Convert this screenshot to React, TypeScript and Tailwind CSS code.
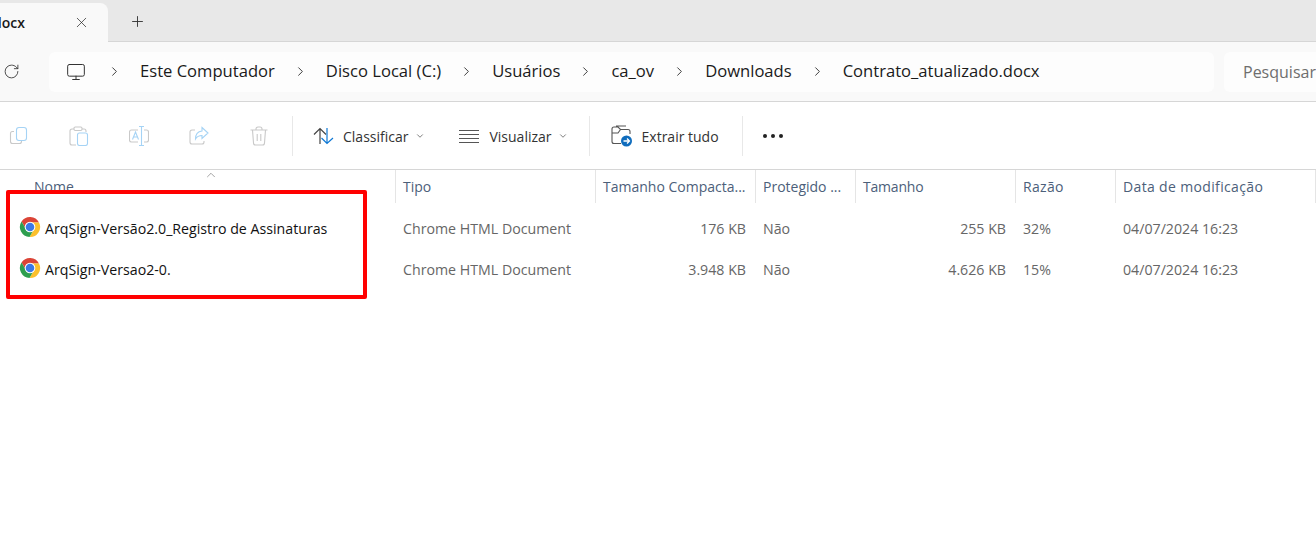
import { X, Plus, RotateCw, Monitor, ChevronRight, ChevronDown, ChevronUp } from 'lucide-react';

const font = "font-['Open_Sans','Noto_Sans',sans-serif]";

// ─── Icons ──────────────────────────────────────────────────────────────────

function ChromeIcon() {
    return (
        <svg width="22" height="22" viewBox="0 0 24 24" className="shrink-0 -mt-[2px]">
            <path fill="#DB4437" d="M12 7L21.8 7A11 11 0 0 0 2.77 6.01L7.67 14.5A5 5 0 0 1 12 7Z" />
            <path fill="#FBC02D" d="M16.33 14.5L11.43 22.99A11 11 0 0 0 21.8 7L12 7A5 5 0 0 1 16.33 14.5Z" />
            <path fill="#2E9E4F" d="M7.67 14.5L2.77 6.01A11 11 0 0 0 11.43 22.99L16.33 14.5A5 5 0 0 1 7.67 14.5Z" />
            <circle cx="12" cy="12" r="5.8" fill="#fff" />
            <circle cx="12" cy="12" r="4.7" fill="#3B78E7" />
        </svg>
    );
}

function CopyIcon() {
    return (
        <svg width="20" height="20" viewBox="0 0 20 20" fill="none" strokeWidth="1.1">
            <path stroke="#c9c9c9" d="M5 5.5H3.5a2 2 0 0 0-2 2v8a2 2 0 0 0 2 2h7a2 2 0 0 0 2-2v-1" />
            <rect x="7.5" y="1.5" width="10" height="13" rx="2.5" stroke="#a5d3f5" />
        </svg>
    );
}

function PasteIcon() {
    return (
        <svg width="20" height="20" viewBox="0 0 20 20" fill="none" strokeWidth="1.1">
            <path stroke="#c9c9c9" d="M5 3H3a2 2 0 0 0-2 2v12a2 2 0 0 0 2 2h4M13 3h2a2 2 0 0 1 2 2v1" />
            <rect x="5" y="1" width="8" height="3.5" rx="1.2" stroke="#c9c9c9" />
            <rect x="8.5" y="7" width="10" height="12.5" rx="2" stroke="#a5d3f5" />
        </svg>
    );
}

function RenameIcon() {
    return (
        <svg width="20" height="20" viewBox="0 0 20 20" fill="none" strokeWidth="1.1">
            <path stroke="#c9c9c9" d="M9 4H2.5a2 2 0 0 0-2 2v8a2 2 0 0 0 2 2H9M15 4h2.5a2 2 0 0 1 2 2v8a2 2 0 0 1-2 2H15" />
            <path stroke="#a5d3f5" d="M10 .5h5M12.5 .5v19M10 19.5h5M3.5 13.5L6.5 6l3 7.5M4.5 11h4" />
        </svg>
    );
}

function ShareIcon() {
    return (
        <svg width="20" height="20" viewBox="0 0 20 20" fill="none" strokeWidth="1.1">
            <path stroke="#c9c9c9" d="M6 4H3a2 2 0 0 0-2 2v10a2 2 0 0 0 2 2h10a2 2 0 0 0 2-2v-1" />
            <path stroke="#a5d3f5" d="M13 1.5L19 7l-6 5.5V9.5c-3 0-5 1-6.5 3.5 0-5 2.5-7.5 6.5-8V1.5Z" />
        </svg>
    );
}

function TrashIcon() {
    return (
        <svg width="20" height="20" viewBox="0 0 20 20" fill="none" strokeWidth="1.1" stroke="#c9c9c9">
            <path d="M1.5 4h17M7 4V3a2 2 0 0 1 2-2h2a2 2 0 0 1 2 2v1M3.5 4l1 13a2 2 0 0 0 2 2h7a2 2 0 0 0 2-2l1-13M8.2 8v7M11.8 8v7" />
        </svg>
    );
}

function SortIcon() {
    return (
        <svg width="22" height="18" viewBox="0 0 22 18" fill="none" strokeWidth="1.2" className="shrink-0">
            <path stroke="#444" d="M7 17V1.5M1 7.5l6-6 6 6" />
            <path stroke="#0f78d4" d="M14 1v15.5M8.5 11l5.5 5.5 6-5.5" />
        </svg>
    );
}

function ListIcon() {
    return (
        <svg width="20" height="14" viewBox="0 0 20 14" fill="none" stroke="#555" strokeWidth="1" className="shrink-0">
            <path d="M0 1.5h20M0 5.5h20M0 9.5h20M0 13.5h20" />
        </svg>
    );
}

function ExtractIcon() {
    return (
        <svg width="22" height="22" viewBox="0 0 22 22" fill="none" className="shrink-0">
            <path
                stroke="#555"
                strokeWidth="1.1"
                d="M10 18.5H3a2 2 0 0 1-2-2V4a2 2 0 0 1 2-2h4l2.5 2.5H17a2 2 0 0 1 2 2V9M1 8h6l2.5-3.5M5 1h10"
            />
            <circle cx="15.5" cy="16" r="5.5" fill="#0f6cbd" />
            <path stroke="#fff" strokeWidth="1.3" d="M12.5 16h6M16 13.5l2.5 2.5-2.5 2.5" />
        </svg>
    );
}

function Crumb({ label }: { label: string }) {
    return (
        <>
            <ChevronRight size={15} strokeWidth={1.4} className="text-[#222] shrink-0" />
            <span className="whitespace-nowrap -mt-px">{label}</span>
        </>
    );
}

// ─── Data ───────────────────────────────────────────────────────────────────

const files = [
    { name: 'ArqSign-Versão2.0_Registro de Assinaturas', packed: '176 KB', size: '255 KB', ratio: '32%' },
    { name: 'ArqSign-Versao2-0.', packed: '3.948 KB', size: '4.626 KB', ratio: '15%' },
];

const columns = [
    { label: 'Tipo', extra: '' },
    { label: 'Tamanho Compacta...', extra: '' },
    { label: 'Protegido ...', extra: '' },
    { label: 'Tamanho', extra: 'tracking-[-0.2px]' },
    { label: 'Razão', extra: 'tracking-[0.3px]' },
    { label: 'Data de modificação', extra: 'tracking-[0.35px]' },
];

const gridCols = 'grid grid-cols-[396px_200px_160px_100px_160px_100px_200px]';

// ─── Page ───────────────────────────────────────────────────────────────────

export default function App() {
    return (
        <div className={`relative w-[1316px] h-[560px] overflow-hidden bg-white ${font}`}>

            {/* Tab strip */}
            <div className="flex h-[42px] items-end bg-[#e8e8e8] border-b border-[#d6d6d6]">
                <div className="flex items-center justify-between w-[108px] h-[39px] -mb-px pr-[18px] bg-[#f9f9f9] rounded-tr-lg overflow-hidden">
                    <span className="-ml-[7px] text-[14px] font-semibold text-[#1a1a1a]">docx</span>
                    <X size={17} strokeWidth={1} className="text-[#222]" />
                </div>
                <div className="flex h-[39px] items-center pl-[21px]">
                    <Plus size={17} strokeWidth={1.3} className="text-[#333]" />
                </div>
            </div>

            {/* Address row */}
            <div className="flex items-center h-[60px] bg-[#f9f9f9] border-b border-[#d6d6d6]">
                <RotateCw size={17} strokeWidth={1.2} className="ml-[3px] text-[#333] shrink-0" />
                <div className="flex items-center gap-[21px] ml-[29px] w-[1165px] h-10 pl-[17px] bg-[#fdfdfd] rounded-md text-[16.6px] text-[#1a1a1a]">
                    <Monitor size={20} strokeWidth={1.2} className="text-[#333] shrink-0" />
                    <div className="flex items-center gap-[18px]">
                        <Crumb label="Este Computador" />
                        <Crumb label="Disco Local (C:)" />
                        <Crumb label="Usuários" />
                        <Crumb label="ca_ov" />
                        <Crumb label="Downloads" />
                        <Crumb label="Contrato_atualizado.docx" />
                    </div>
                </div>
                <div className="flex items-center ml-[10px] flex-1 h-10 pl-[19px] bg-[#fdfdfd] rounded-l-md text-[16px] text-[#6e6e6e] whitespace-nowrap overflow-hidden">
                    Pesquisar
                </div>
            </div>

            {/* Command bar */}
            <div className="flex items-center h-[68px] border-b border-[#d6d6d6] text-sm text-[#333]">
                <div className="flex items-center gap-10 pl-[9px] pr-[23px]">
                    <CopyIcon />
                    <PasteIcon />
                    <RenameIcon />
                    <ShareIcon />
                    <TrashIcon />
                </div>
                <div className="w-px h-10 bg-[#e8e8e8]" />
                <div className="flex items-center gap-2 pl-[20px]">
                    <SortIcon />
                    <span className="mt-[2px]">Classificar</span>
                    <ChevronDown size={10} className="text-[#666] ml-[-1px]" />
                </div>
                <div className="flex items-center pl-[34px] pr-[21px]">
                    <ListIcon />
                    <span className="mt-[2px] ml-[10px]">Visualizar</span>
                    <ChevronDown size={10} className="text-[#666] ml-[6px]" />
                </div>
                <div className="w-px h-10 bg-[#e8e8e8]" />
                <div className="flex items-center gap-[9px] pl-[21px] pr-[23px]">
                    <ExtractIcon />
                    <span className="mt-[2px]">Extrair tudo</span>
                </div>
                <div className="w-px h-10 bg-[#e8e8e8]" />
                <div className="flex items-center gap-[4px] pl-[20px]">
                    <span className="w-1 h-1 rounded-full bg-[#222]" />
                    <span className="w-1 h-1 rounded-full bg-[#222]" />
                    <span className="w-1 h-1 rounded-full bg-[#222]" />
                </div>
            </div>

            {/* Column headers */}
            <div className={`${gridCols} relative h-[33px] text-sm text-[#4c607a]`}>
                <ChevronUp size={14} strokeWidth={1} className="absolute left-[204px] -top-[2px] text-[#666]" />
                <div className="flex items-center pl-[34px] border-r border-[#e5e5e5]">Nome</div>
                {columns.map(col => (
                    <div key={col.label} className={`flex items-center pl-[7px] border-r border-[#e5e5e5] whitespace-nowrap overflow-hidden ${col.extra}`}>
                        {col.label}
                    </div>
                ))}
            </div>

            {/* Rows */}
            <div className="pt-[5px] text-[14.2px] text-[#666]">
                {files.map(file => (
                    <div key={file.name} className={`${gridCols} h-[41px] items-center`}>
                        <div className="flex items-center gap-[4px] pl-[19px] text-[#111]">
                            <ChromeIcon />
                            <span className="whitespace-nowrap">{file.name}</span>
                        </div>
                        <div className="pl-[7px]">Chrome HTML Document</div>
                        <div className="pr-[10px] text-right">{file.packed}</div>
                        <div className="pl-[7px]">Não</div>
                        <div className="pr-[10px] text-right">{file.size}</div>
                        <div className="pl-[7px]">{file.ratio}</div>
                        <div className="pl-[7px]">04/07/2024 16:23</div>
                    </div>
                ))}
            </div>

            {/* Red highlight over the list */}
            <div className="absolute left-[6px] top-[190px] w-[361px] h-[109px] border-4 border-[#ff0000] rounded-[2px]" />
        </div>
    );
}
